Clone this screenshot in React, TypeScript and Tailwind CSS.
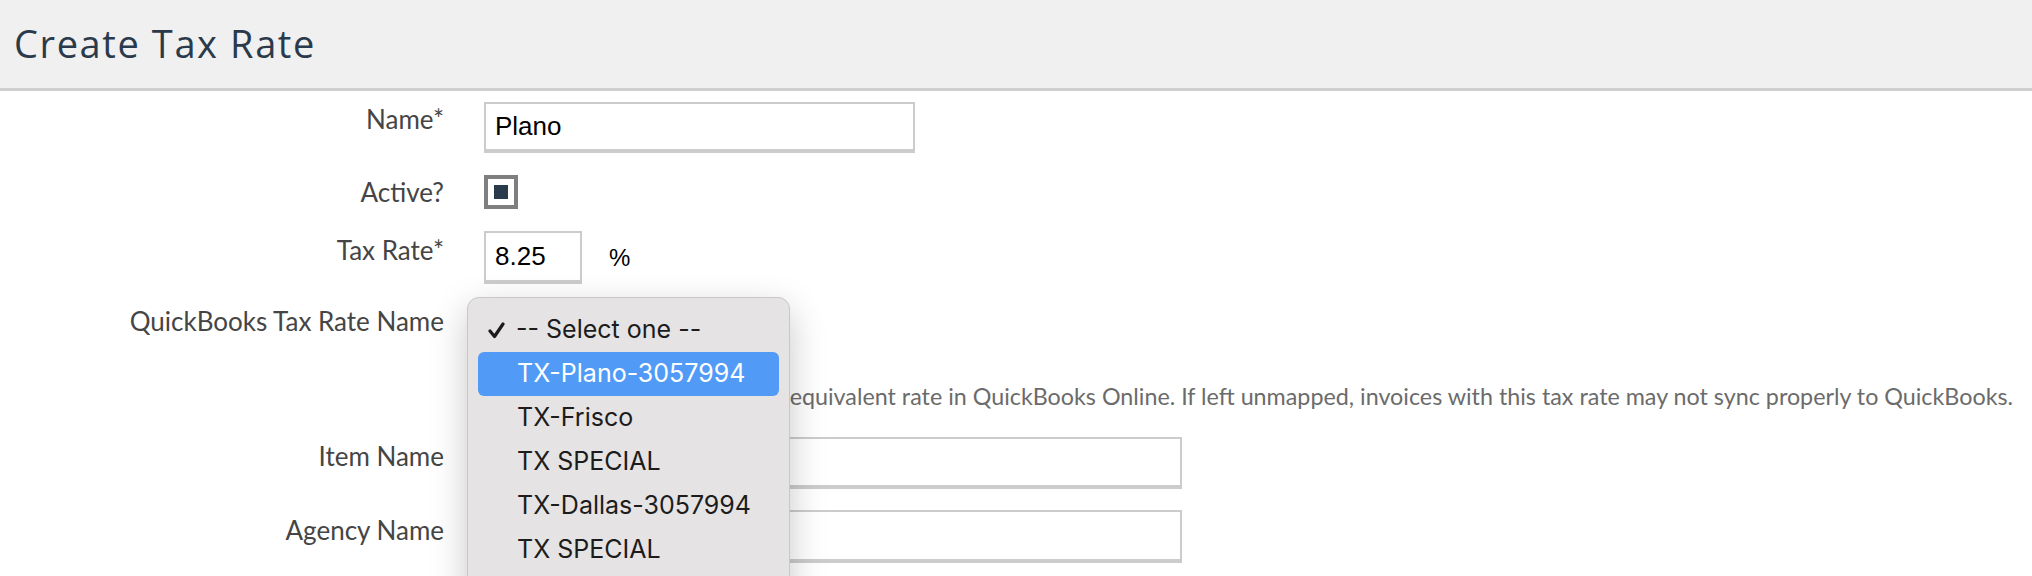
import React from "react";

const labelCls =
  "w-[444px] shrink-0 text-right text-[26px] leading-[32px] text-[#454545]";

const Field = ({
  label,
  pt,
  children,
  className,
}: {
  label: string;
  pt: string;
  children: React.ReactNode;
  className?: string;
}) => (
  <div className={`flex items-start ${className ?? ""}`}>
    <div className={`${labelCls} ${pt}`}>{label}</div>
    <div className="ml-[40px] flex items-center">{children}</div>
  </div>
);

const options = [
  "TX-Plano-3057994",
  "TX-Frisco",
  "TX SPECIAL",
  "TX-Dallas-3057994",
  "TX SPECIAL",
  "TX-Allen",
];

const App = () => {
  return (
    <div className="relative h-[576px] w-[2032px] overflow-hidden bg-white font-['Lato',sans-serif]">
      <div className="flex h-[91px] items-center border-b-[3px] border-[#cfcfcf] bg-[#f0f0f0] pb-[2px] pl-[14px]">
        <h1 className="font-['Open_Sans',sans-serif] text-[38px] font-normal tracking-[1.6px] text-[#2b3a4b]">
          Create Tax Rate
        </h1>
      </div>

      <Field label="Name*" pt="pt-[1px]" className="mt-[11px]">
        <div className="flex h-[51px] w-[431px] items-center border-2 border-b-4 border-[#cccccc] pl-[9px] font-['Liberation_Sans',Arial,sans-serif] text-[26px] text-black">
          Plano
        </div>
      </Field>

      <div className="mt-[22px] flex items-center">
        <div className={labelCls}>Active?</div>
        <div className="ml-[40px] flex h-[34px] w-[34px] items-center justify-center border-4 border-[#7f7f7f] bg-white">
          <div className="h-[14px] w-[14px] bg-[#2a3b4c]" />
        </div>
      </div>

      <Field label="Tax Rate*" pt="pt-[3px]" className="mt-[22px]">
        <div className="flex h-[53px] w-[98px] items-center border-2 border-b-4 border-[#cccccc] pl-[9px] font-['Liberation_Sans',Arial,sans-serif] text-[26px] text-black">
          8.25
        </div>
        <span className="ml-[27px] font-['Liberation_Sans',Arial,sans-serif] text-[24px] text-black">
          %
        </span>
      </Field>

      <Field label="QuickBooks Tax Rate Name" pt="pt-[4px]" className="mt-[17px]">
        <div className="h-[44px] w-[300px]" />
      </Field>

      <p className="ml-[484px] mt-[35px] whitespace-nowrap text-[23.3px] leading-[32px] text-[#6b6b6b]">
        Please map this tax rate to its equivalent rate in QuickBooks Online. If left unmapped, invoices with this tax rate may not sync properly to QuickBooks.
      </p>

      <Field label="Item Name" pt="pt-[3px]" className="mt-[25px]">
        <div className="h-[52px] w-[698px] border-2 border-b-4 border-[#cccccc]" />
      </Field>

      <Field label="Agency Name" pt="pt-[4px]" className="mt-[21px]">
        <div className="h-[53px] w-[698px] border-2 border-b-4 border-[#cccccc]" />
      </Field>

      {/* open select menu */}
      <div className="absolute left-[467px] top-[297px] w-[323px] rounded-[12px] border border-[#c9c7c7] bg-[#e5e3e3] px-[10px] pb-[10px] pt-[10px] font-['Inter',sans-serif] text-[25px] text-[#1c1c1c] shadow-[0_12px_36px_rgba(0,0,0,0.22)]">
        <div className="flex h-[44px] items-center">
          <svg width="17" height="17" viewBox="0 0 17 17" className="ml-[10px] mr-[11px]">
            <path d="M2 9 L6.5 14.5 L15 2" fill="none" stroke="#1c1c1c" strokeWidth="3.2" strokeLinecap="round" strokeLinejoin="round" />
          </svg>
          <span>-- Select one --</span>
        </div>
        {options.map((o, i) => (
          <div
            key={i}
            className={`flex h-[44px] items-center rounded-[6px] pl-[39px] ${
              i === 0 ? "bg-[#519bf7] text-white" : ""
            }`}
          >
            {o}
          </div>
        ))}
      </div>
    </div>
  );
};

export default App;
